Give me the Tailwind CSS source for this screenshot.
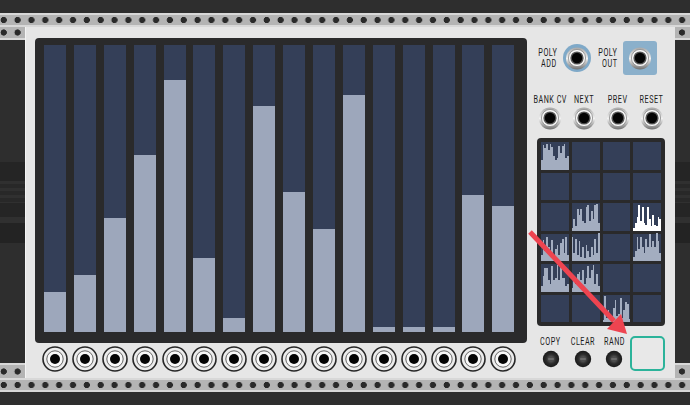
<!DOCTYPE html>
<html lang="en">
<head>
    <meta charset="UTF-8">
    <meta name="viewport" content="width=device-width, initial-scale=1.0">
    <title>Sequencer module</title>
    <script src="https://cdn.jsdelivr.net/npm/@tailwindcss/browser@4"></script>
</head>
<body class="bg-[#2e2e2e] overflow-hidden">
    <svg class="absolute w-0 h-0">
        <defs>
            <linearGradient id="metal" x1="0" y1="0" x2="0" y2="1">
                <stop offset="0" stop-color="#a8a8a8"/>
                <stop offset="0.5" stop-color="#f2f2f2"/>
                <stop offset="1" stop-color="#707070"/>
            </linearGradient>
            <radialGradient id="knob">
                <stop offset="0.3" stop-color="#4d4d4d"/>
                <stop offset="0.6" stop-color="#2b2b2b"/>
                <stop offset="1" stop-color="#1a1a1a"/>
            </radialGradient>
        </defs>
        <symbol id="jack" viewBox="0 0 26 26">
            <circle cx="13" cy="13" r="12" fill="#ececec" stroke="#262626" stroke-width="1.6"/>
            <circle cx="13" cy="13" r="8.2" fill="#f8f8f8" stroke="#666" stroke-width="1"/>
            <circle cx="13" cy="13" r="5" fill="#040404"/>
        </symbol>
        <symbol id="socket" viewBox="0 0 24 24">
            <circle cx="12" cy="12.5" r="11" fill="url(#metal)"/>
            <circle cx="12" cy="12" r="8.6" fill="#f6f6f6" stroke="#8a8a8a" stroke-width="0.8"/>
            <circle cx="12" cy="12" r="6.6" fill="#555"/>
            <circle cx="12" cy="12" r="5.2" fill="#040404"/>
        </symbol>
        <symbol id="button" viewBox="0 0 18 18">
            <circle cx="9" cy="9" r="8.2" fill="url(#knob)"/>
            <rect x="6" y="8" width="6" height="2" rx="1" fill="#6a6a6a"/>
        </symbol>
    </svg>

    <div class="relative w-[690px] h-[405px] overflow-hidden font-['Roboto',sans-serif]">
        <div class="h-[13px] bg-[#2e2e2e]"></div>
        <div class="h-[14px] border-y-2 border-y-[#d8d8d8] bg-[#b4b4b4] bg-[radial-gradient(circle_at_3.7px_50%,#2a2a2a_2.8px,transparent_3.4px)] bg-[length:13.85px_10px]"></div>

        <div class="flex h-[351px]">
            <!-- left rack strip -->
            <div class="w-[25px] flex flex-col">
                <div class="h-[13px] border-b-2 border-b-[#d8d8d8] bg-[#b4b4b4] bg-[radial-gradient(circle_at_3.7px_50%,#2a2a2a_2.8px,transparent_3.4px)] bg-[length:13.85px_11px]"></div>
                <div class="h-[122px] bg-[#2e2e2e]"></div>
                <div class="h-[19px] bg-[#252525]"></div>
                <div class="h-[22px] bg-[repeating-linear-gradient(#303030_0_3px,#282828_3px_7px)]"></div>
                <div class="h-[14px] bg-[#252525]"></div>
                <div class="h-[6px] bg-[#303030]"></div>
                <div class="h-[20px] bg-[#232323]"></div>
                <div class="flex-1 bg-[#2e2e2e]"></div>
                <div class="h-[15px] border-t-2 border-t-[#d8d8d8] bg-[#b4b4b4] bg-[radial-gradient(circle_at_3.7px_50%,#2a2a2a_2.8px,transparent_3.4px)] bg-[length:13.85px_13px]"></div>
            </div>

            <!-- module panel -->
            <div class="w-[650px] bg-[#e6e6e6] border-l border-l-[#f4f4f4] pl-[9px] pt-[11px] flex">
                <div class="w-[492px]">
                    <div id="steps" class="h-[305px] rounded-[4px] bg-[#2a2a2b] pt-[7px] pl-[9px] flex gap-[7.9px]"></div>
                    <div id="outs" class="mt-[3px] pl-[7px] flex gap-[3.9px]"></div>
                </div>

                <div class="w-[128px] ml-[10px] text-[#1a1a1a] text-[10px] leading-[11px] whitespace-nowrap">
                    <div class="flex items-center h-[34px] mt-[3px]">
                        <div class="w-[20px] flex flex-col items-end"><span class="origin-right scale-x-[0.72] tracking-[0.7px]">POLY</span><span class="origin-right scale-x-[0.72] tracking-[0.7px]">ADD</span></div>
                        <div class="ml-[6px] w-[28px] h-[28px] rounded-full bg-[#7fa9c8] flex items-center justify-center">
                            <svg class="w-[24px] h-[24px]"><use href="#socket"/></svg>
                        </div>
                        <div class="w-[26px] flex flex-col items-end"><span class="origin-right scale-x-[0.72] tracking-[0.7px]">POLY</span><span class="origin-right scale-x-[0.72] tracking-[0.7px]">OUT</span></div>
                        <div class="ml-[6px] w-[34px] h-[34px] rounded-[3px] bg-[#8bb0cb] flex items-center justify-center">
                            <svg class="w-[24px] h-[24px]"><use href="#socket"/></svg>
                        </div>
                    </div>

                    <div class="-mx-1 mt-[19px] grid grid-cols-4">
                        <div class="flex flex-col items-center gap-[1px]"><span class="scale-x-[0.72] tracking-[0.7px]">BANK CV</span><svg class="w-[24px] h-[24px]"><use href="#socket"/></svg></div>
                        <div class="flex flex-col items-center gap-[1px]"><span class="scale-x-[0.72] tracking-[0.7px]">NEXT</span><svg class="w-[24px] h-[24px]"><use href="#socket"/></svg></div>
                        <div class="flex flex-col items-center gap-[1px]"><span class="scale-x-[0.72] tracking-[0.7px]">PREV</span><svg class="w-[24px] h-[24px]"><use href="#socket"/></svg></div>
                        <div class="flex flex-col items-center gap-[1px]"><span class="scale-x-[0.72] tracking-[0.7px]">RESET</span><svg class="w-[24px] h-[24px]"><use href="#socket"/></svg></div>
                    </div>

                    <div id="banks" class="mt-[8px] h-[188px] rounded-[4px] bg-[#2a2a2b] p-[4px] grid grid-cols-4 grid-rows-6 gap-[3px]"></div>

                    <div class="flex -ml-[2px] mt-[10px]">
                        <div class="w-[32.5px] flex flex-col items-center gap-[3px]"><span class="scale-x-[0.72] tracking-[0.7px]">COPY</span><svg class="w-[18px] h-[18px]"><use href="#button"/></svg></div>
                        <div class="w-[32.5px] flex flex-col items-center gap-[3px]"><span class="scale-x-[0.72] tracking-[0.7px]">CLEAR</span><svg class="w-[18px] h-[18px]"><use href="#button"/></svg></div>
                        <div class="w-[32.5px] flex flex-col items-center gap-[3px]"><span class="scale-x-[0.72] tracking-[0.7px]">RAND</span><svg class="w-[18px] h-[18px]"><use href="#button"/></svg></div>
                        <div class="w-[36px] h-[35px] rounded-[5px] border-2 border-[#2bb39a] bg-[#e8e8e8]"></div>
                    </div>
                </div>
            </div>

            <!-- right rack strip -->
            <div class="w-[15px] flex flex-col">
                <div class="h-[13px] border-b-2 border-b-[#d8d8d8] bg-[#b4b4b4] bg-[radial-gradient(circle_at_7px_50%,#2a2a2a_2.8px,transparent_3.4px)] bg-[length:13.85px_11px]"></div>
                <div class="h-[122px] bg-[#2e2e2e]"></div>
                <div class="h-[19px] bg-[#252525]"></div>
                <div class="h-[22px] bg-[repeating-linear-gradient(#303030_0_3px,#282828_3px_7px)]"></div>
                <div class="h-[14px] bg-[#252525]"></div>
                <div class="h-[6px] bg-[#303030]"></div>
                <div class="h-[20px] bg-[#232323]"></div>
                <div class="flex-1 bg-[#2e2e2e]"></div>
                <div class="h-[15px] border-t-2 border-t-[#d8d8d8] bg-[#b4b4b4] bg-[radial-gradient(circle_at_7px_50%,#2a2a2a_2.8px,transparent_3.4px)] bg-[length:13.85px_13px]"></div>
            </div>
        </div>

        <div class="h-[14px] border-y-2 border-y-[#d8d8d8] bg-[#b4b4b4] bg-[radial-gradient(circle_at_3.7px_50%,#2a2a2a_2.8px,transparent_3.4px)] bg-[length:13.85px_10px]"></div>
        <div class="h-[13px] bg-[#2e2e2e]"></div>

        <!-- annotation arrow on top of the screenshot -->
        <svg class="absolute left-0 top-0 w-[690px] h-[405px]" viewBox="0 0 690 405">
            <line x1="530" y1="232" x2="614" y2="321" stroke="#ee4450" stroke-width="5"/>
            <polygon points="627,334 607,329 621,314" fill="#ee4450"/>
        </svg>
    </div>

    <script>
        const levels = [40, 57, 114, 177, 252, 74, 14, 226, 140, 103, 237, 5, 5, 5, 137, 126];
        const steps = document.getElementById('steps');
        const outs = document.getElementById('outs');
        levels.forEach(h => {
            steps.innerHTML += `<div class="w-[22px] h-[287px] bg-[#343f58] flex items-end"><div class="w-full bg-[#9da7bb]" style="height:${h}px"></div></div>`;
            outs.innerHTML += `<svg class="w-[26px] h-[26px] shrink-0"><use href="#jack"/></svg>`;
        });

        const patterns = {
            0: [10, 25, 22, 26, 20, 26, 23, 14, 10, 12, 24, 17, 24, 26, 12, 14],
            9: [3, 12, 5, 22, 16, 22, 10, 8, 24, 26, 10, 20, 12, 26, 27, 8],
            11: [3, 8, 14, 26, 10, 24, 8, 6, 24, 12, 5, 16, 6, 5, 14, 12],
            12: [6, 21, 10, 24, 14, 8, 21, 6, 12, 16, 6, 18, 22, 8, 24, 6],
            13: [24, 8, 22, 6, 20, 4, 14, 3, 16, 10, 4, 14, 6, 22, 8, 28],
            15: [4, 10, 24, 12, 24, 14, 8, 22, 14, 27, 14, 20, 14, 28, 20, 8],
            16: [6, 16, 24, 24, 12, 8, 26, 12, 14, 27, 12, 26, 14, 14, 6, 8],
            17: [4, 12, 8, 18, 20, 12, 22, 8, 14, 26, 14, 22, 27, 8, 18, 6],
            22: [2, 26, 4, 12, 6, 4, 14, 22, 6, 8, 24, 4, 12, 20, 18, 3]
        };
        const banks = document.getElementById('banks');
        for (let i = 0; i < 24; i++) {
            const bars = (patterns[i] || []).map(h =>
                `<div class="flex-1 ${i === 11 ? 'bg-white' : 'bg-[#a3adc0]'}" style="height:${h}px"></div>`
            ).join('');
            banks.innerHTML += `<div class="bg-[#343f58] flex items-end">${bars}</div>`;
        }
    </script>
</body>
</html>
